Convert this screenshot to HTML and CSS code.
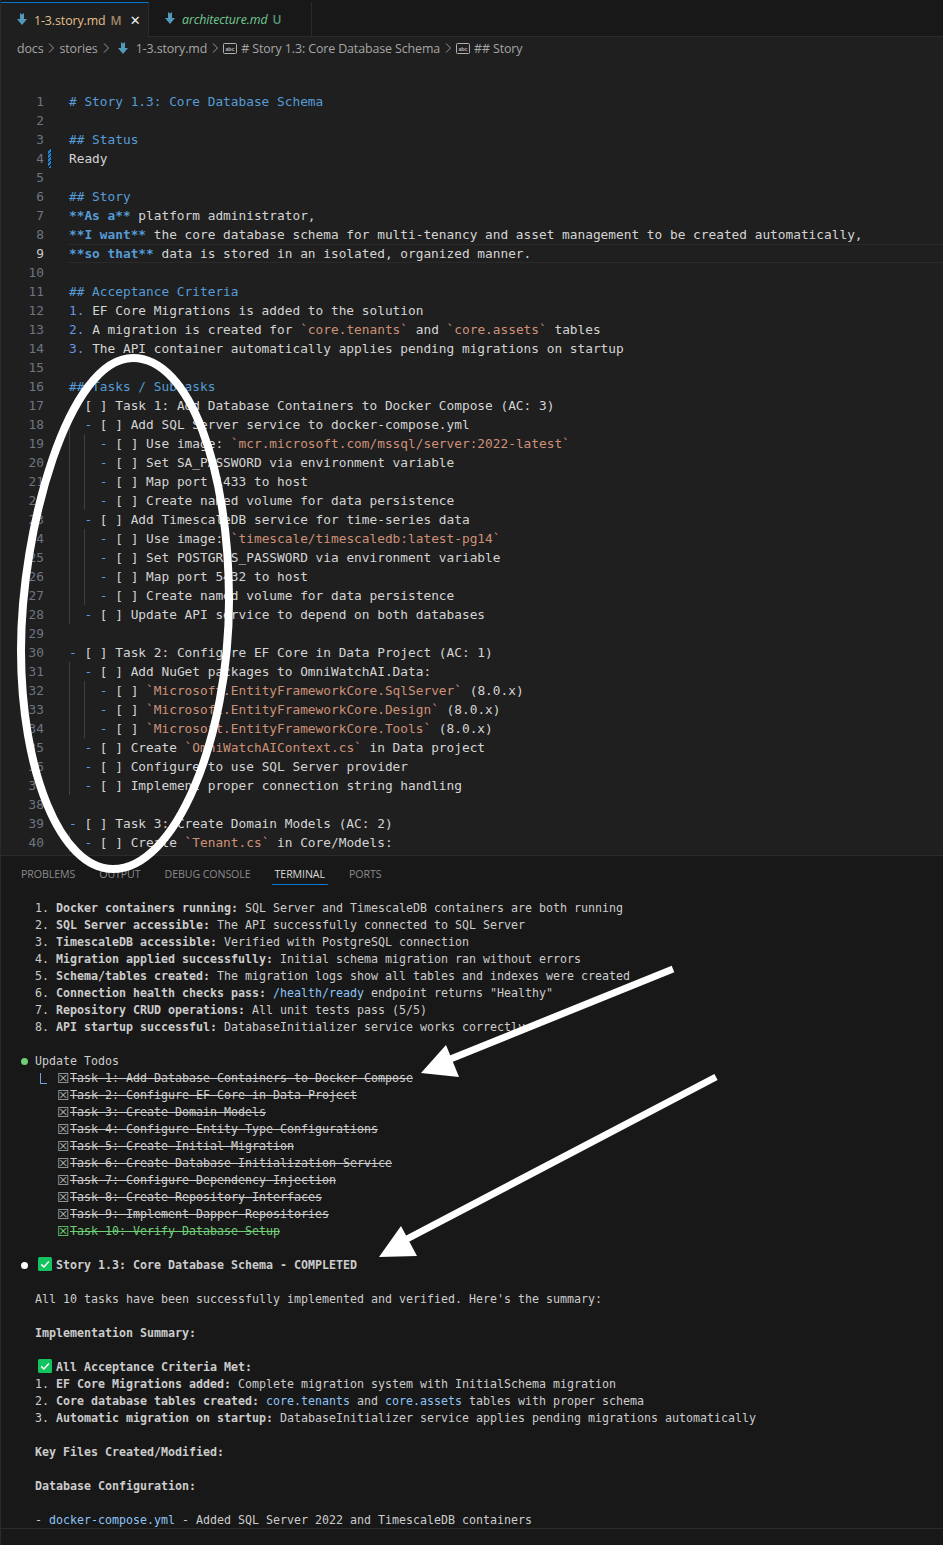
FILE: index.html
```html
<!DOCTYPE html>
<html lang="en">
<head>
<meta charset="utf-8">
<title>1-3.story.md</title>
<link rel="stylesheet" href="styles.css">
</head>
<body>
<svg width="0" height="0" class="defs">
  <defs>
    <symbol id="md" viewBox="0 0 10 12"><path d="M3 0 L5 1.5 L7 0 V6 H10 L5 12 L0 6 H3 Z" fill="#519aba"/></symbol>
    <symbol id="chev" viewBox="0 0 6 10"><path d="M1 .5 L5.5 5 L1 9.5" fill="none" stroke="#9a9a9a" stroke-width="1"/></symbol>
    <symbol id="abc" viewBox="0 0 14 11"><rect x=".5" y=".5" width="13" height="10" rx="1" fill="none" stroke="#b0b0b0"/><text x="7" y="7.5" font-size="5.5" font-weight="700" text-anchor="middle" fill="#b0b0b0" font-family="Liberation Sans, sans-serif">abc</text></symbol>
    <symbol id="ok" viewBox="0 0 14 14"><rect width="14" height="14" rx="1.5" fill="#12c35f"/><path d="M3.2 7.4 L5.9 10 L10.9 4.4" fill="none" stroke="#fff" stroke-width="1.5"/></symbol>
  </defs>
</svg>

<div class="window">
  <div class="tabs">
    <div class="tab tab-active">
      <svg class="md-icon"><use href="#md"/></svg>
      <span class="tab-name modified">1-3.story.md</span>
      <span class="tab-flag flag-m">M</span>
      <span class="tab-close">✕</span>
    </div>
    <div class="tab tab-other">
      <svg class="md-icon"><use href="#md"/></svg>
      <span class="tab-name untracked">architecture.md</span>
      <span class="tab-flag flag-u">U</span>
    </div>
  </div>

  <div class="crumbs">
    <span>docs</span><svg class="chev"><use href="#chev"/></svg>
    <span>stories</span><svg class="chev"><use href="#chev"/></svg>
    <svg class="md-icon crumb-md"><use href="#md"/></svg><span>1-3.story.md</span><svg class="chev"><use href="#chev"/></svg>
    <svg class="abc"><use href="#abc"/></svg><span># Story 1.3: Core Database Schema</span><svg class="chev"><use href="#chev"/></svg>
    <svg class="abc"><use href="#abc"/></svg><span>## Story</span>
  </div>

  <div class="editor">
    <div class="ln"><i>1</i><code class="h"># Story 1.3: Core Database Schema</code></div>
    <div class="ln"><i>2</i><code></code></div>
    <div class="ln"><i>3</i><code class="h">## Status</code></div>
    <div class="ln mod"><i>4</i><code>Ready</code></div>
    <div class="ln"><i>5</i><code></code></div>
    <div class="ln"><i>6</i><code class="h">## Story</code></div>
    <div class="ln"><i>7</i><code><b>**As a**</b> platform administrator,</code></div>
    <div class="ln"><i>8</i><code><b>**I want**</b> the core database schema for multi-tenancy and asset management to be created automatically,</code></div>
    <div class="ln active"><i>9</i><code><b>**so that**</b> data is stored in an isolated, organized manner.</code></div>
    <div class="ln"><i>10</i><code></code></div>
    <div class="ln"><i>11</i><code class="h">## Acceptance Criteria</code></div>
    <div class="ln"><i>12</i><code><u>1.</u> EF Core Migrations is added to the solution</code></div>
    <div class="ln"><i>13</i><code><u>2.</u> A migration is created for <s>`core.tenants`</s> and <s>`core.assets`</s> tables</code></div>
    <div class="ln"><i>14</i><code><u>3.</u> The API container automatically applies pending migrations on startup</code></div>
    <div class="ln"><i>15</i><code></code></div>
    <div class="ln"><i>16</i><code class="h">## Tasks / Subtasks</code></div>
    <div class="ln"><i>17</i><code><u>-</u> [ ] Task 1: Add Database Containers to Docker Compose (AC: 3)</code></div>
    <div class="ln g1"><i>18</i><code>  <u>-</u> [ ] Add SQL Server service to docker-compose.yml</code></div>
    <div class="ln g2"><i>19</i><code>    <u>-</u> [ ] Use image: <s>`mcr.microsoft.com/mssql/server:2022-latest`</s></code></div>
    <div class="ln g2"><i>20</i><code>    <u>-</u> [ ] Set SA_PASSWORD via environment variable</code></div>
    <div class="ln g2"><i>21</i><code>    <u>-</u> [ ] Map port 1433 to host</code></div>
    <div class="ln g2"><i>22</i><code>    <u>-</u> [ ] Create named volume for data persistence</code></div>
    <div class="ln g1"><i>23</i><code>  <u>-</u> [ ] Add TimescaleDB service for time-series data</code></div>
    <div class="ln g2"><i>24</i><code>    <u>-</u> [ ] Use image: <s>`timescale/timescaledb:latest-pg14`</s></code></div>
    <div class="ln g2"><i>25</i><code>    <u>-</u> [ ] Set POSTGRES_PASSWORD via environment variable</code></div>
    <div class="ln g2"><i>26</i><code>    <u>-</u> [ ] Map port 5432 to host</code></div>
    <div class="ln g2"><i>27</i><code>    <u>-</u> [ ] Create named volume for data persistence</code></div>
    <div class="ln g1"><i>28</i><code>  <u>-</u> [ ] Update API service to depend on both databases</code></div>
    <div class="ln"><i>29</i><code></code></div>
    <div class="ln"><i>30</i><code><u>-</u> [ ] Task 2: Configure EF Core in Data Project (AC: 1)</code></div>
    <div class="ln g1"><i>31</i><code>  <u>-</u> [ ] Add NuGet packages to OmniWatchAI.Data:</code></div>
    <div class="ln g2"><i>32</i><code>    <u>-</u> [ ] <s>`Microsoft.EntityFrameworkCore.SqlServer`</s> (8.0.x)</code></div>
    <div class="ln g2"><i>33</i><code>    <u>-</u> [ ] <s>`Microsoft.EntityFrameworkCore.Design`</s> (8.0.x)</code></div>
    <div class="ln g2"><i>34</i><code>    <u>-</u> [ ] <s>`Microsoft.EntityFrameworkCore.Tools`</s> (8.0.x)</code></div>
    <div class="ln g1"><i>35</i><code>  <u>-</u> [ ] Create <s>`OmniWatchAIContext.cs`</s> in Data project</code></div>
    <div class="ln g1"><i>36</i><code>  <u>-</u> [ ] Configure to use SQL Server provider</code></div>
    <div class="ln g1"><i>37</i><code>  <u>-</u> [ ] Implement proper connection string handling</code></div>
    <div class="ln"><i>38</i><code></code></div>
    <div class="ln"><i>39</i><code><u>-</u> [ ] Task 3: Create Domain Models (AC: 2)</code></div>
    <div class="ln g1"><i>40</i><code>  <u>-</u> [ ] Create <s>`Tenant.cs`</s> in Core/Models:</code></div>
  </div>

  <div class="panel">
    <div class="panel-tabs">
      <span>PROBLEMS</span><span>OUTPUT</span><span>DEBUG CONSOLE</span><span class="panel-on">TERMINAL</span><span>PORTS</span>
    </div>
    <div class="term">
      <p>1. <b>Docker containers running:</b> SQL Server and TimescaleDB containers are both running</p>
      <p>2. <b>SQL Server accessible:</b> The API successfully connected to SQL Server</p>
      <p>3. <b>TimescaleDB accessible:</b> Verified with PostgreSQL connection</p>
      <p>4. <b>Migration applied successfully:</b> Initial schema migration ran without errors</p>
      <p>5. <b>Schema/tables created:</b> The migration logs show all tables and indexes were created</p>
      <p>6. <b>Connection health checks pass:</b> <a>/health/ready</a> endpoint returns "Healthy"</p>
      <p>7. <b>Repository CRUD operations:</b> All unit tests pass (5/5)</p>
      <p>8. <b>API startup successful:</b> DatabaseInitializer service works correctly</p>
      <p class="blank"></p>
      <p class="bul"><em class="dot green"></em>Update Todos</p>
      <p class="todo"><span class="elbow"></span><span class="box">☒</span><del>Task 1: Add Database Containers to Docker Compose</del></p>
      <p class="todo"><span class="box">☒</span><del>Task 2: Configure EF Core in Data Project</del></p>
      <p class="todo"><span class="box">☒</span><del>Task 3: Create Domain Models</del></p>
      <p class="todo"><span class="box">☒</span><del>Task 4: Configure Entity Type Configurations</del></p>
      <p class="todo"><span class="box">☒</span><del>Task 5: Create Initial Migration</del></p>
      <p class="todo"><span class="box">☒</span><del>Task 6: Create Database Initialization Service</del></p>
      <p class="todo"><span class="box">☒</span><del>Task 7: Configure Dependency Injection</del></p>
      <p class="todo"><span class="box">☒</span><del>Task 8: Create Repository Interfaces</del></p>
      <p class="todo"><span class="box">☒</span><del>Task 9: Implement Dapper Repositories</del></p>
      <p class="todo last"><span class="box">☒</span><del>Task 10: Verify Database Setup</del></p>
      <p class="blank"></p>
      <p class="bul"><em class="dot white"></em><svg class="ok"><use href="#ok"/></svg><b>Story 1.3: Core Database Schema - COMPLETED</b></p>
      <p class="blank"></p>
      <p>All 10 tasks have been successfully implemented and verified. Here's the summary:</p>
      <p class="blank"></p>
      <p><b>Implementation Summary:</b></p>
      <p class="blank"></p>
      <p class="okrow"><svg class="ok"><use href="#ok"/></svg><b>All Acceptance Criteria Met:</b></p>
      <p>1. <b>EF Core Migrations added:</b> Complete migration system with InitialSchema migration</p>
      <p>2. <b>Core database tables created:</b> <a>core.tenants</a> and <a>core.assets</a> tables with proper schema</p>
      <p>3. <b>Automatic migration on startup:</b> DatabaseInitializer service applies pending migrations automatically</p>
      <p class="blank"></p>
      <p><b>Key Files Created/Modified:</b></p>
      <p class="blank"></p>
      <p><b>Database Configuration:</b></p>
      <p class="blank"></p>
      <p>- <a>docker-compose.yml</a> - Added SQL Server 2022 and TimescaleDB containers</p>
    </div>
  </div>
  <div class="footer"></div>
</div>

<svg class="marks" viewBox="0 0 943 1545" aria-hidden="true">
  <path d="M133 358 C190 358 229 470 229 600 C229 740 175 869 113 869 C60 869 21 770 21 650 C21 530 68 358 133 358 Z" fill="none" stroke="#fff" stroke-width="8"/>
  <path d="M673 969 L448 1060" stroke="#fff" stroke-width="7" fill="none"/>
  <path d="M421 1073 L446 1045 L459 1077 Z" fill="#fff"/>
  <path d="M716 1077 L405 1240" stroke="#fff" stroke-width="7" fill="none"/>
  <path d="M379 1257 L401 1226 L417 1256 Z" fill="#fff"/>
</svg>
</body>
</html>
```
FILE: styles.css
```css
* { box-sizing: border-box; }
html, body { margin: 0; padding: 0; background: #181818; }
body { position: relative; width: 943px; height: 1545px; overflow: hidden; }
.defs { position: absolute; }

.window {
  display: flex;
  flex-direction: column;
  height: 1545px;
  border-left: 1px solid #2b2b2b;
  font-family: "Open Sans", "Noto Sans", sans-serif;
}

/* Tab strip */
.tabs {
  display: flex;
  height: 35px;
  margin-top: 2px;
  background: #181818;
  border-bottom: 1px solid #2b2b2b;
  flex: none;
}
.tab {
  display: flex;
  align-items: center;
  height: 35px;
  padding-left: 16px;
  font-size: 12.4px;
  white-space: nowrap;
  border-right: 1px solid #2b2b2b;
}
.tab-active {
  width: 148px;
  background: #1f1f1f;
  border-top: 1px solid #0078d4;
}
.tab-other { width: 163px; height: 34px; }
.md-icon { width: 10px; height: 12px; flex: none; margin-top: -3px; }
.tab-name { margin-left: 7px; letter-spacing: -.1px; }
.modified { color: #e2c08d; }
.untracked { color: #73c991; font-style: italic; }
.tab-flag { margin-left: 5px; font-size: 12px; font-weight: 600; }
.flag-m { color: #a08a68; }
.flag-u { color: #5e9c78; }
.tab-close { margin-left: 8px; color: #f0f0f0; font-size: 13px; font-family: "DejaVu Sans", sans-serif; }

/* Breadcrumbs */
.crumbs {
  display: flex;
  align-items: center;
  height: 22px;
  flex: none;
  padding-left: 16px;
  background: #1f1f1f;
  color: #a6a6a6;
  font-size: 12.4px;
  letter-spacing: -.1px;
}
.chev { width: 6px; height: 10px; margin: 0 5px; flex: none; }
.crumb-md { margin: 0 8px 0 4px; }
.abc { width: 14px; height: 11px; margin: 0 4px 0 0; flex: none; }

/* Editor */
.editor {
  flex: none;
  height: 796px;
  padding-top: 33px;
  background: #1f1f1f;
  overflow: hidden;
  font-family: "DejaVu Sans Mono", monospace;
  font-size: 12.8px;
  color: #d4d4d4;
}
.ln { display: flex; height: 19px; line-height: 19px; }
.ln i {
  flex: none;
  width: 50px;
  padding-right: 7px;
  margin-right: 18px;
  text-align: right;
  font-style: normal;
  color: #6e7681;
}
.ln code {
  flex: 1;
  font: inherit;
  white-space: pre;
  background-repeat: no-repeat;
}
.ln b, .h { color: #569cd6; font-weight: 700; }
.ln u { color: #6796e6; text-decoration: none; }
.ln s { color: #ce9178; text-decoration: none; }
.g1 code {
  background-image: linear-gradient(#404040, #404040);
  background-size: 1px 100%;
  background-position: 0 0;
}
.g2 code {
  background-image: linear-gradient(#404040, #404040), linear-gradient(#404040, #404040);
  background-size: 1px 100%, 1px 100%;
  background-position: 0 0, 15px 0;
}
.mod i {
  background-image: repeating-linear-gradient(-45deg, #1a85d6 0 2px, #1f1f1f 2px 3px);
  background-size: 3px 100%;
  background-position: right 0 top 0;
  background-repeat: no-repeat;
}
.active i { color: #cccccc; }
.active code { margin-left: -1px; padding-left: 1px; box-shadow: inset 0 1px 0 #2a2a2a, inset 0 -1px 0 #2a2a2a; }

/* Panel */
.panel {
  flex: none;
  height: 674px;
  background: #181818;
  border-top: 1px solid #2b2b2b;
  border-bottom: 1px solid #2b2b2b;
  overflow: hidden;
}
.panel-tabs {
  display: flex;
  gap: 24px;
  height: 35px;
  padding-left: 20px;
  font-size: 10.65px;
  color: #8a8a8a;
}
.panel-tabs span { height: 28px; line-height: 36px; letter-spacing: -.1px; }
.panel-tabs .panel-on {
  color: #d8d8d8;
  padding: 0 3px;
  margin: 0 -3px;
  box-shadow: 0 1px 0 #0078d4;
}
.term {
  padding: 9px 0 0 34px;
  font-family: "DejaVu Sans Mono", monospace;
  font-size: 11.63px;
  line-height: 17px;
  color: #cccccc;
}
.term p { margin: 0; height: 17px; white-space: pre; }
.term b { font-weight: 700; }
.term a { color: #8cc4f5; }
.term .bul { margin-left: -14px; }
.dot { display: inline-block; width: 7px; height: 7px; margin-right: 7px; border-radius: 50%; }
.green { background: #6fcf76; }
.white { background: #ffffff; }
.ok { width: 14px; height: 14px; margin: 0 4px 0 3px; vertical-align: -2px; }
.term .todo { position: relative; display: flex; padding-left: 22px; }
.elbow {
  position: absolute;
  left: 5px;
  top: 3px;
  width: 7px;
  height: 11px;
  border-left: 1px solid #6ea6e0;
  border-bottom: 1px solid #6ea6e0;
}
.box {
  flex: none;
  width: 13px;
  font-family: "DejaVu Sans", sans-serif;
  font-size: 14px;
  line-height: 16px;
  color: #a8a8a8;
}
.todo del { text-decoration: line-through; }
.last, .last .box { color: #6fcf76; }

.footer { flex: 1; background: #181818; }

/* Annotations drawn on top of the screenshot */
.marks {
  position: absolute;
  left: 0;
  top: 0;
  width: 943px;
  height: 1545px;
  pointer-events: none;
}
```
